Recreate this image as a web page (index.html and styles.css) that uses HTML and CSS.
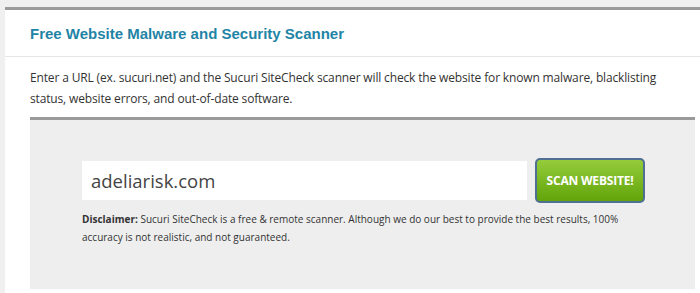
FILE: index.html
```html
<!DOCTYPE html>
<html>
<head>
<meta charset="utf-8">
<link rel="stylesheet" href="styles.css">
</head>
<body>
<div class="page">
  <div class="panel">
    <div class="panel-head">
      <h1 class="title">Free Website Malware and Security Scanner</h1>
    </div>
    <div class="panel-body">
      <p class="intro">Enter a URL (ex. sucuri.net) and the Sucuri SiteCheck scanner will check the website for known malware, blacklisting status, website errors, and out-of-date software.</p>
      <div class="scan-box">
        <form class="scan-form">
          <div class="scan-row">
            <input class="url-input" type="text" value="adeliarisk.com">
            <button class="scan-btn" type="button">SCAN WEBSITE!</button>
          </div>
          <p class="disclaimer"><strong>Disclaimer:</strong> Sucuri SiteCheck is a free &amp; remote scanner. Although we do our best to provide the best results, 100% accuracy is not realistic, and not guaranteed.</p>
        </form>
      </div>
    </div>
  </div>
</div>
</body>
</html>
```
FILE: styles.css
```css
html, body {
  margin: 0;
  padding: 0;
  background: #f0f0f0;
  width: 700px;
  height: 293px;
  overflow: hidden;
}
.page {
  padding: 7px 0 0 5px;
}
.panel {
  background: #fff;
  border-top: 3px solid #9a9a9a;
  width: 695px;
  height: 283px;
}
.panel-head {
  height: 46px;
  border-bottom: 1px solid #e6e6e6;
  padding-left: 25px;
  display: flex;
  align-items: center;
}
.title {
  margin: 0;
  font-family: "Liberation Sans", Arial, sans-serif;
  font-weight: bold;
  font-size: 15px;
  color: #1f84a6;
}
.panel-body {
  padding: 10px 0 0 25px;
}
.intro {
  margin: 0;
  width: 660px;
  font-family: "Open Sans", sans-serif;
  font-size: 12px;
  letter-spacing: -0.15px;
  line-height: 21px;
  color: #333;
}
.scan-box {
  margin-top: 8px;
  width: 665px;
  height: 172px;
  background: #eeeeee;
  border-top: 3px solid #9a9a9a;
  box-sizing: border-box;
  padding: 38px 0 0 52px;
}
.scan-row {
  display: flex;
  align-items: center;
  gap: 8px;
}
.url-input {
  width: 445px;
  height: 39px;
  box-sizing: border-box;
  border: none;
  background: #fff;
  padding: 0 9px;
  font-family: "Open Sans", sans-serif;
  font-size: 18.5px;
  color: #444;
  outline: none;
}
.scan-btn {
  width: 110px;
  height: 45px;
  box-sizing: border-box;
  border: 2px solid #4f6f93;
  border-radius: 5px;
  background: linear-gradient(#94cc3c, #62a40a);
  color: #fff;
  font-family: "Open Sans", sans-serif;
  font-weight: bold;
  font-size: 12px;
  letter-spacing: -0.2px;
  padding: 0;
}
.disclaimer {
  margin: 7px 0 0;
  width: 545px;
  font-family: "Open Sans", sans-serif;
  font-size: 10px;
  line-height: 18px;
  color: #333;
}
.disclaimer strong {
  font-weight: bold;
}
```
